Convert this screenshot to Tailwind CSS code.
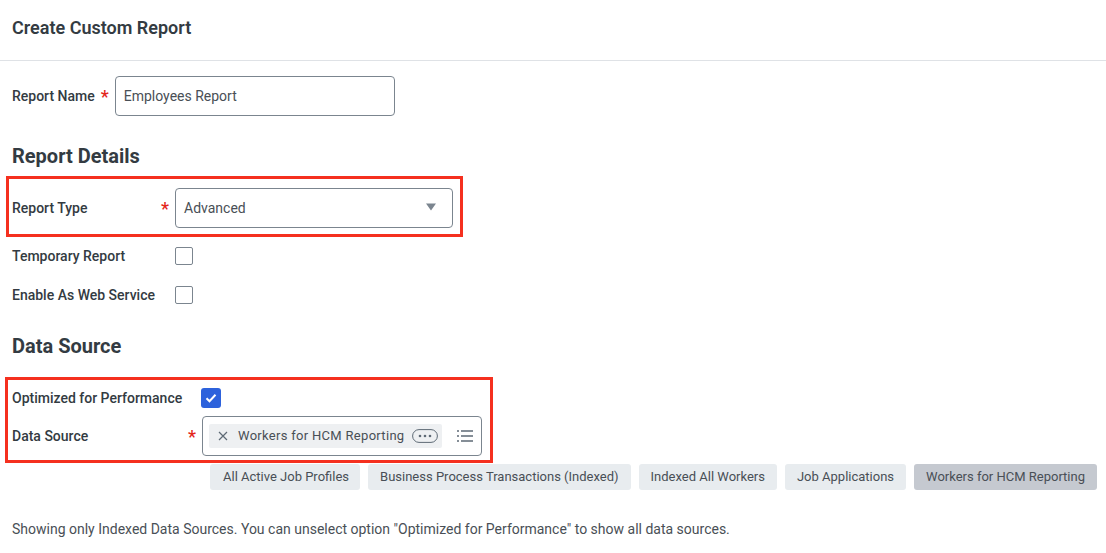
<!DOCTYPE html>
<html lang="en">
<head>
    <meta charset="UTF-8" />
    <title>Create Custom Report</title>
    <script src="https://cdn.jsdelivr.net/npm/@tailwindcss/browser@4"></script>
</head>
<body class="bg-white font-['Roboto',sans-serif] text-[#333b42] overflow-hidden">
    <div class="w-[1106px] h-[553px] overflow-hidden">

        <header class="h-[61px] border-b border-[#dfe2e6] pl-3 pt-[17px]">
            <h1 class="text-[18px] leading-[22px] font-semibold">Create Custom Report</h1>
        </header>

        <div class="flex items-center mt-[15px] pl-3 h-10">
            <label class="text-[14px] font-medium">Report Name</label>
            <span class="text-[#e3261b] text-[18px] font-medium ml-[6px] mt-[2px] leading-none">*</span>
            <div class="ml-[6px] w-[280px] h-10 border border-[#7b858f] rounded-[4px] flex items-center pl-2 text-[14px] text-[#494f56]">Employees Report</div>
        </div>

        <h2 class="mt-[26px] ml-3 text-[20px] leading-[28px] font-bold">Report Details</h2>

        <div class="mt-[6px] ml-[6px] w-[457px] h-[61px] border-[3px] border-[#f5301f] flex items-center pl-[3px] pt-[3px]">
            <label class="w-[149px] text-[14px] font-medium">Report Type</label>
            <span class="w-[14px] text-[#e3261b] text-[18px] font-medium mt-[2px] leading-none">*</span>
            <div class="w-[278px] h-10 border border-[#7b858f] rounded-[4px] flex items-center justify-between pl-2 pr-[15px] text-[14px] text-[#494f56]">
                <span>Advanced</span>
                <svg width="12" height="8" viewBox="0 0 12 8" class="-mt-[2px]"><path d="M1 0.5h10L6 7.5z" fill="#7b858f" /></svg>
            </div>
        </div>

        <div class="flex items-center pl-3 h-[38px]">
            <label class="w-[163px] text-[14px] font-medium">Temporary Report</label>
            <span class="w-[18px] h-[18px] border border-[#7b858f] rounded-[2px]"></span>
        </div>
        <div class="flex items-center mt-[1px] pl-3 h-[38px]">
            <label class="w-[163px] text-[14px] font-medium">Enable As Web Service</label>
            <span class="w-[18px] h-[18px] border border-[#7b858f] rounded-[2px]"></span>
        </div>

        <h2 class="mt-[18px] ml-3 text-[20px] leading-[28px] font-bold">Data Source</h2>

        <div class="mt-[17px] ml-[5px] w-[488px] h-[86px] border-[3px] border-[#f5301f] pl-[4px]">
            <div class="flex items-center h-[32px] mt-[2px]">
                <label class="w-[189px] text-[14px] font-medium">Optimized for Performance</label>
                <span class="w-5 h-5 bg-[#2d62dc] rounded-[3px] flex items-center justify-center">
                    <svg width="12" height="10" viewBox="0 0 12 10"><path d="M1.5 5.2l3 3 6-6.4" fill="none" stroke="#fff" stroke-width="2" /></svg>
                </span>
            </div>
            <div class="flex items-center h-10 mt-[2px]">
                <label class="w-[176px] text-[14px] font-medium">Data Source</label>
                <span class="w-[14px] text-[#e3261b] text-[18px] font-medium mt-[2px] leading-none">*</span>
                <div class="w-[280px] h-10 border border-[#7b858f] rounded-[4px] flex items-center pl-[6px]">
                    <div class="w-[233px] h-6 bg-[#eef0f2] rounded-[2px] flex items-center pl-[9px] text-[13px] text-[#494f56]">
                        <svg width="10" height="10" viewBox="0 0 10 10"><path d="M1 1l8 8M9 1l-8 8" stroke="#5e6a75" stroke-width="1.2" /></svg>
                        <span class="ml-[10px] tracking-[0.3px] whitespace-nowrap">Workers for HCM Reporting</span>
                        <svg width="26" height="14" viewBox="0 0 26 14" class="ml-[8px]">
                            <rect x="0.6" y="0.6" width="24.8" height="12.8" rx="6.4" fill="none" stroke="#5e6a75" stroke-width="1" />
                            <circle cx="8" cy="7" r="1.3" fill="#5e6a75" /><circle cx="13" cy="7" r="1.3" fill="#5e6a75" /><circle cx="18" cy="7" r="1.3" fill="#5e6a75" />
                        </svg>
                    </div>
                    <svg width="16" height="12" viewBox="0 0 16 12" class="ml-[15px]">
                        <path d="M0 1h2M4 1h12M0 6h2M4 6h12M0 11h2M4 11h12" stroke="#5e6a75" stroke-width="1.4" />
                    </svg>
                </div>
            </div>
        </div>

        <div class="mt-[1px] ml-[210px] flex gap-2 text-[13px] text-[#494f56]">
            <span class="h-[26px] pl-[13px] pr-[11px] bg-[#e8ecef] rounded-[3px] flex items-center whitespace-nowrap">All Active Job Profiles</span>
            <span class="h-[26px] px-[12px] bg-[#e8ecef] rounded-[3px] flex items-center whitespace-nowrap">Business Process Transactions (Indexed)</span>
            <span class="h-[26px] px-[12px] bg-[#e8ecef] rounded-[3px] flex items-center whitespace-nowrap">Indexed All Workers</span>
            <span class="h-[26px] px-[12px] bg-[#e8ecef] rounded-[3px] flex items-center whitespace-nowrap">Job Applications</span>
            <span class="h-[26px] pl-[12px] pr-[12px] bg-[#c5c9d0] rounded-[3px] flex items-center whitespace-nowrap">Workers for HCM Reporting</span>
        </div>

        <p class="mt-[29px] ml-3 text-[14px] leading-[20px] text-[#494f56] whitespace-nowrap">Showing only Indexed Data Sources. You can unselect option "Optimized for Performance" to show all data sources.</p>
    </div>
</body>
</html>
